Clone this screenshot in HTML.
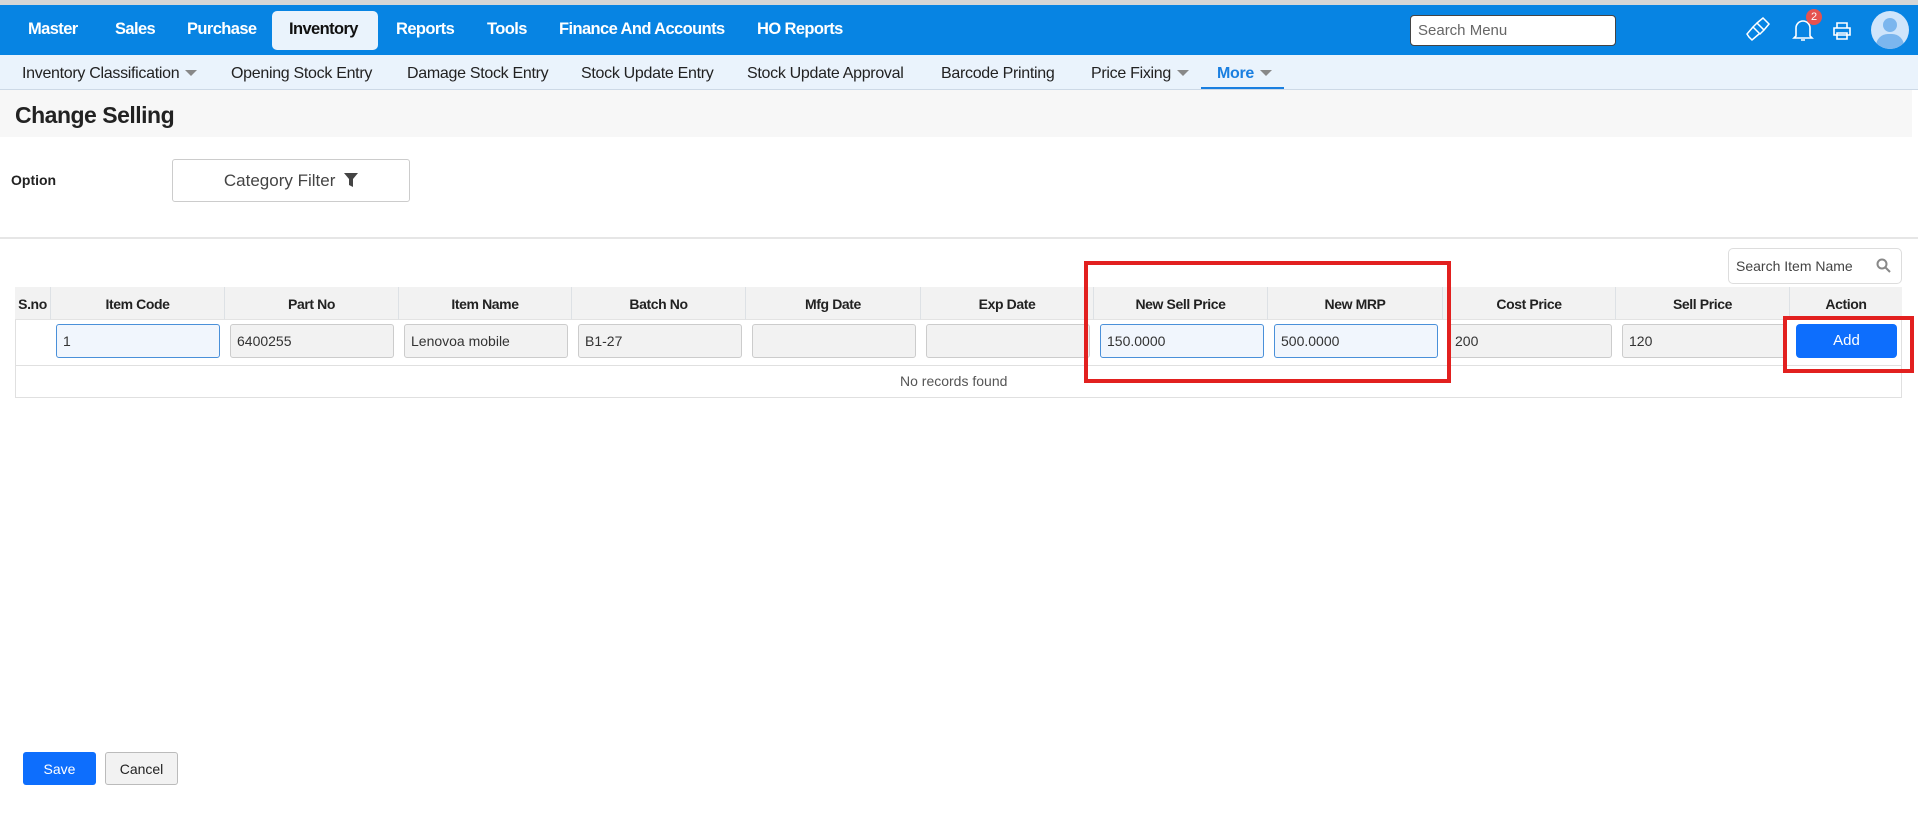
<!DOCTYPE html>
<html><head><meta charset="utf-8"><style>
*{box-sizing:border-box;margin:0;padding:0}
body{width:1918px;height:832px;background:#fff;font-family:"Liberation Sans",sans-serif;position:relative;overflow:hidden;color:#222}
.abs{position:absolute}
.top{left:0;top:0;width:1918px;height:5px;background:#d6d6d6}
.nav{left:0;top:5px;width:1918px;height:50px;background:#0784e3}
.nav span{position:absolute;top:15px;color:#fff;font-weight:bold;font-size:16.5px;letter-spacing:-0.6px}
.tab{left:272px;top:6px;width:106px;height:39px;background:#eaf3fc;border-radius:5px}
.sub{left:0;top:55px;width:1918px;height:35px;background:#eaf3fc;border-bottom:1px solid #cdd9e6}
.sub span{position:absolute;top:10px;font-size:16px;color:#222;letter-spacing:-0.3px}
.caret{display:inline-block;width:0;height:0;border-left:6px solid transparent;border-right:6px solid transparent;border-top:6px solid #888;margin-left:6px;vertical-align:2px}
.title{left:0;top:90px;width:1912px;height:47px;background:#f7f7f7}
.inp{position:absolute;height:34px;border:1px solid #ccc;border-radius:3px;background:#f2f2f2;font-size:14px;padding:8px 6px;color:#333}
.inp.b{border-color:#4a90d9;background:#f1f6fd}
.hd{position:absolute;top:287px;height:33px;background:#f2f2f2;border-right:1px solid #dde1e5;border-bottom:1px solid #e3e3e3;font-size:14px;font-weight:bold;text-align:center;padding-top:9px;letter-spacing:-0.4px}
.red{position:absolute;border:4px solid #e2201f}
</style></head><body>
<div class="abs top"></div>
<div class="abs nav">
<div class="abs tab"></div>
<span style="left:28px">Master</span>
<span style="left:115px">Sales</span>
<span style="left:187px">Purchase</span>
<span style="left:289px;color:#111">Inventory</span>
<span style="left:396px">Reports</span>
<span style="left:487px">Tools</span>
<span style="left:559px">Finance And Accounts</span>
<span style="left:757px">HO Reports</span>
<div class="abs" style="left:1410px;top:10px;width:206px;height:31px;background:#fff;border:1px solid #444;border-radius:4px;font-size:15px;color:#666;padding:6px 7px">Search Menu</div>
<svg class="abs" style="left:1745px;top:12px" width="26" height="26" viewBox="0 0 26 26" fill="none" stroke="#fff" stroke-width="1.5"><path d="M12 6l6-5 6 6-5 6z M12 6l7 7-4 4-7-7z M8 10l-6 7 2 3 3 3 7-6"/></svg>
<svg class="abs" style="left:1792px;top:12px" width="22" height="26" viewBox="0 0 22 26" fill="none" stroke="#fff" stroke-width="1.6"><path d="M4 19V11a7 7 0 0 1 14 0v8l2 2H2z M9 23h4"/></svg>
<div class="abs" style="left:1806px;top:4px;width:16px;height:16px;border-radius:8px;background:#e5524f;color:#fff;font-size:11px;text-align:center;line-height:16px">2</div>
<svg class="abs" style="left:1832px;top:16px" width="20" height="20" viewBox="0 0 20 20" fill="none" stroke="#fff" stroke-width="1.6"><path d="M5 7V2h10v5 M2 7h16v7H2z M5 12h10v6H5z"/></svg>
<div class="abs" style="left:1871px;top:6px;width:38px;height:38px;border-radius:19px;background:#cfe5fb;overflow:hidden"><div class="abs" style="left:12px;top:7px;width:14px;height:14px;border-radius:7px;background:#7bb6ee"></div><div class="abs" style="left:5px;top:23px;width:28px;height:24px;border-radius:14px;background:#7bb6ee"></div></div>
</div>
<div class="abs sub">
<span style="left:22px">Inventory Classification<i class="caret"></i></span>
<span style="left:231px">Opening Stock Entry</span>
<span style="left:407px">Damage Stock Entry</span>
<span style="left:581px">Stock Update Entry</span>
<span style="left:747px">Stock Update Approval</span>
<span style="left:941px">Barcode Printing</span>
<span style="left:1091px">Price Fixing<i class="caret"></i></span>
<span style="left:1217px;color:#1a7fe0;font-weight:bold">More<i class="caret"></i></span>
<div class="abs" style="left:1201px;top:32px;width:83px;height:2px;background:#1a7fe0"></div>
</div>
<div class="abs title"><div class="abs" style="left:15px;top:12px;font-size:23px;font-weight:bold;color:#222;letter-spacing:-0.5px">Change Selling</div></div>
<div class="abs" style="left:11px;top:172px;font-size:14px;font-weight:bold">Option</div>
<div class="abs" style="left:172px;top:159px;width:238px;height:43px;border:1px solid #ccc;border-radius:3px;font-size:17px;color:#444;text-align:center;padding-top:11px">Category Filter <svg width="14" height="14" viewBox="0 0 14 14" style="vertical-align:-1px;margin-left:4px"><path d="M0 0h14L9 6v8L5 12V6z" fill="#444"/></svg></div>
<div class="abs" style="left:0;top:237px;width:1918px;height:2px;background:#e6e6e6"></div>
<div class="abs" style="left:1728px;top:248px;width:174px;height:36px;border:1px solid #ddd;border-radius:5px;font-size:14px;color:#444;padding:9px 7px">Search Item Name <svg style="position:absolute;right:10px;top:9px" width="15" height="15" viewBox="0 0 15 15" fill="none" stroke="#888" stroke-width="2"><circle cx="6" cy="6" r="4.5"/><path d="M9.5 9.5L14 14"/></svg></div>
<div class="abs" style="left:15px;top:287px;width:1887px;height:111px;border:1px solid #e0e0e0;border-top:2px solid #e0e3e6"></div>
<div class="hd" style="left:15px;width:36px">S.no</div>
<div class="hd" style="left:51px;width:174px">Item Code</div>
<div class="hd" style="left:225px;width:174px">Part No</div>
<div class="hd" style="left:399px;width:173px">Item Name</div>
<div class="hd" style="left:572px;width:174px">Batch No</div>
<div class="hd" style="left:746px;width:175px">Mfg Date</div>
<div class="hd" style="left:921px;width:173px">Exp Date</div>
<div class="hd" style="left:1094px;width:174px">New Sell Price</div>
<div class="hd" style="left:1268px;width:175px">New MRP</div>
<div class="hd" style="left:1443px;width:173px">Cost Price</div>
<div class="hd" style="left:1616px;width:174px">Sell Price</div>
<div class="hd" style="left:1790px;width:112px;border-right:none">Action</div>
<div class="abs" style="left:15px;top:365px;width:1887px;height:1px;background:#e0e0e0"></div>
<div class="inp b" style="left:56px;top:324px;width:164px">1</div>
<div class="inp" style="left:230px;top:324px;width:164px">6400255</div>
<div class="inp" style="left:404px;top:324px;width:164px">Lenovoa mobile</div>
<div class="inp" style="left:578px;top:324px;width:164px">B1-27</div>
<div class="inp" style="left:752px;top:324px;width:164px"></div>
<div class="inp" style="left:926px;top:324px;width:164px"></div>
<div class="inp b" style="left:1100px;top:324px;width:164px">150.0000</div>
<div class="inp b" style="left:1274px;top:324px;width:164px">500.0000</div>
<div class="inp" style="left:1448px;top:324px;width:164px">200</div>
<div class="inp" style="left:1622px;top:324px;width:164px">120</div>
<div class="abs" style="left:1796px;top:324px;width:101px;height:34px;background:#0d6efd;border-radius:4px;color:#fff;font-size:15px;text-align:center;padding-top:8px">Add</div>
<div class="abs" style="left:900px;top:373px;font-size:14px;color:#555">No records found</div>
<div class="red" style="left:1084px;top:261px;width:367px;height:122px"></div>
<div class="red" style="left:1783px;top:316px;width:131px;height:57px"></div>
<div class="abs" style="left:23px;top:752px;width:73px;height:33px;background:#0d6efd;border-radius:3px;color:#fff;font-size:14px;text-align:center;padding-top:9px">Save</div>
<div class="abs" style="left:105px;top:752px;width:73px;height:33px;background:#f2f2f2;border:1px solid #bbb;border-radius:3px;color:#222;font-size:14px;text-align:center;padding-top:8px">Cancel</div>
</body></html>
